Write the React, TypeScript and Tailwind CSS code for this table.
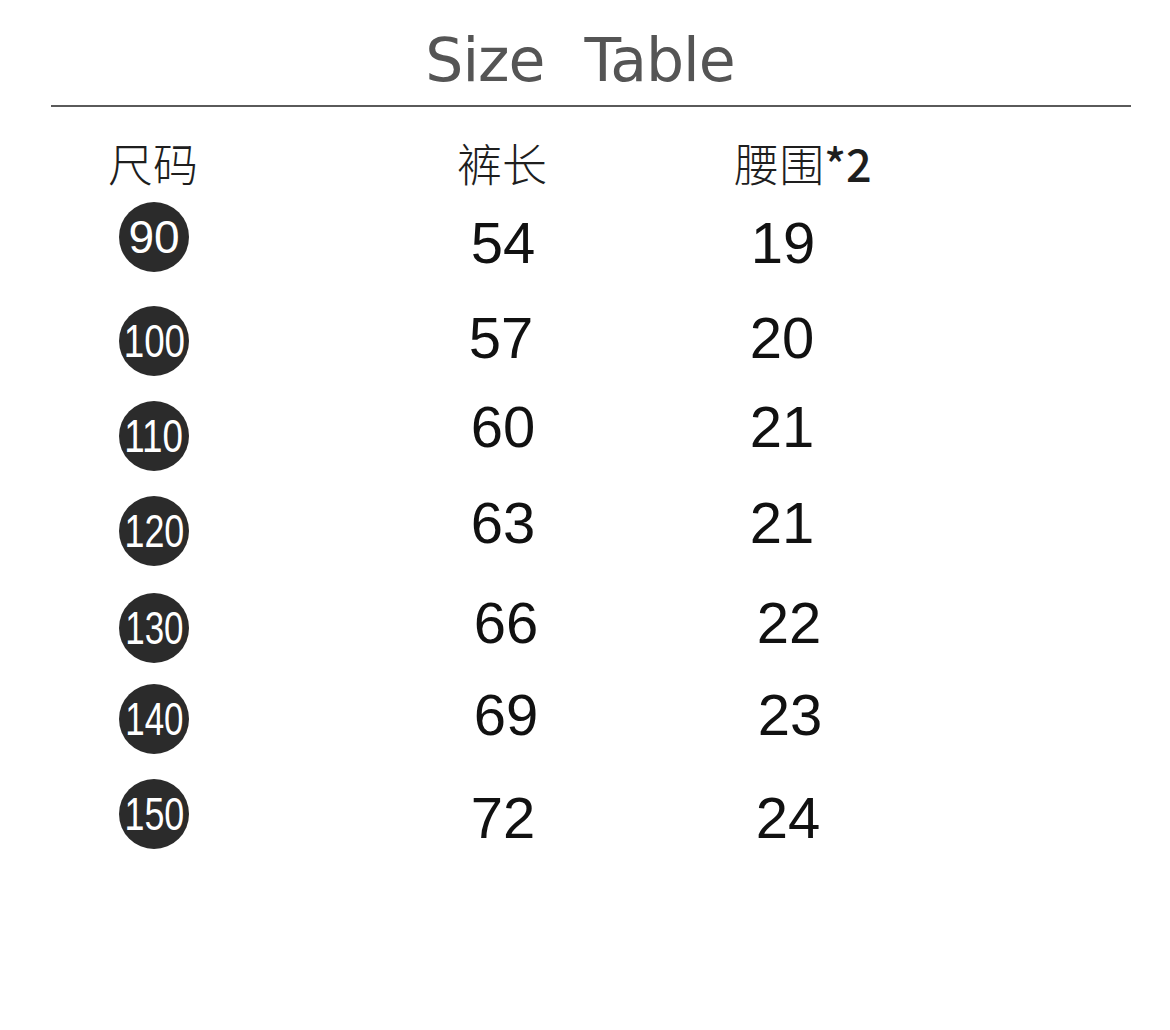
import React from "react";

type Row = {
  size: string;
  len: string;
  waist: string;
  rowCls: string;
  circleTxt: string;
  lenCls: string;
  waistCls: string;
};

const rows: Row[] = [
  { size: "90", len: "54", waist: "19", rowCls: "mt-[14px]", circleTxt: "scale-x-[1]", lenCls: "mt-[12px]", waistCls: "mt-[12px] pr-[10px]" },
  { size: "100", len: "57", waist: "20", rowCls: "mt-[34px]", circleTxt: "scale-x-[0.8]", lenCls: "mb-[6px] pr-[4px]", waistCls: "mb-[6px] pr-[12px]" },
  { size: "110", len: "60", waist: "21", rowCls: "mt-[25px]", circleTxt: "scale-x-[0.8]", lenCls: "mb-[18px]", waistCls: "mb-[18px] pr-[12px]" },
  { size: "120", len: "63", waist: "21", rowCls: "mt-[25px]", circleTxt: "scale-x-[0.78]", lenCls: "mb-[16px]", waistCls: "mb-[16px] pr-[12px]" },
  { size: "130", len: "66", waist: "22", rowCls: "mt-[27px]", circleTxt: "scale-x-[0.76]", lenCls: "mb-[10px] pl-[6px]", waistCls: "mb-[10px] pl-[2px]" },
  { size: "140", len: "69", waist: "23", rowCls: "mt-[21px]", circleTxt: "scale-x-[0.76]", lenCls: "mb-[8px] pl-[6px]", waistCls: "mb-[8px] pl-[4px]" },
  { size: "150", len: "72", waist: "24", rowCls: "mt-[25px]", circleTxt: "scale-x-[0.78]", lenCls: "mt-[8px]", waistCls: "mt-[8px]" },
];

export default function App() {
  return (
    <div className="w-[1170px] h-[1030px] bg-white overflow-hidden">
      <div
        className="pt-[30px] text-center text-[60px] leading-none text-[#555555] h-[92px] tracking-[-1px] pr-[10px]"
        style={{ fontFamily: '"DejaVu Sans", sans-serif' }}
      >
        Size<span className="inline-block w-[40px]" />Table
      </div>
      <div className="mt-[13px] ml-[51px] w-[1080px] h-[2px] bg-[#5a5a5a]" />

      <div
        className="flex h-[81px] pt-[33px] text-[45px] leading-none text-[#1e1e1e] font-light"
        style={{ fontFamily: '"Noto Sans CJK SC", sans-serif' }}
      >
        <div className="w-[306px] flex justify-center">尺码</div>
        <div className="w-[392px] flex justify-center">裤长</div>
        <div className="w-[180px] flex justify-center pl-[30px]">
          腰围<span className="font-medium">*2</span>
        </div>
      </div>

      <div style={{ fontFamily: '"Liberation Sans", Arial, sans-serif' }}>
        {rows.map((r) => (
          <div key={r.size} className={`flex h-[70px] items-center ${r.rowCls}`}>
            <div className="w-[308px] flex justify-center">
              <div className="w-[70px] h-[70px] rounded-full bg-[#2b2b2b] flex items-center justify-center">
                <span className={`text-white text-[46px] leading-none ${r.circleTxt}`}>
                  {r.size}
                </span>
              </div>
            </div>
            <div className="w-[390px] flex justify-center">
              <span className={`text-[58px] leading-none text-[#111] ${r.lenCls}`}>{r.len}</span>
            </div>
            <div className="w-[180px] flex justify-center">
              <span className={`text-[58px] leading-none text-[#111] ${r.waistCls}`}>{r.waist}</span>
            </div>
          </div>
        ))}
      </div>
    </div>
  );
}
